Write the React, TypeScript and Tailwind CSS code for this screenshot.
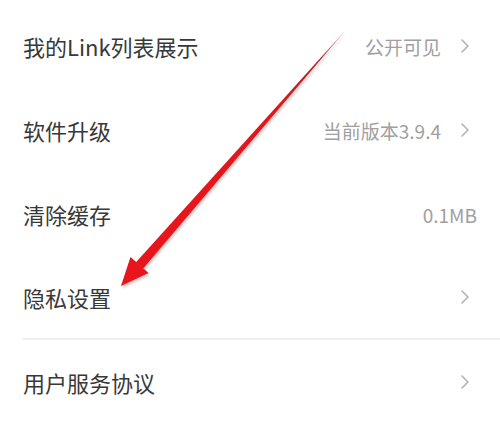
import React from "react";

const Chevron = () => (
  <svg width="10" height="16" viewBox="0 0 10 16" className="ml-[19px] shrink-0">
    <polyline points="2,2 8,8 2,14" fill="none" stroke="#b3b3b3" strokeWidth="1.6" strokeLinecap="round" strokeLinejoin="round" />
  </svg>
);

type Row = { label: string; value?: string; chevron: boolean; divider?: boolean };

const rows: Row[] = [
  { label: "我的Link列表展示", value: "公开可见", chevron: true },
  { label: "软件升级", value: "当前版本3.9.4", chevron: true },
  { label: "清除缓存", value: "0.1MB", chevron: false },
  { label: "隐私设置", chevron: true, divider: true },
  { label: "用户服务协议", chevron: true },
];

export default function App() {
  return (
    <div
      className="relative w-[500px] h-[421px] bg-white overflow-hidden"
      style={{ fontFamily: '"Noto Sans CJK SC", "Noto Sans", sans-serif' }}
    >
      <div className="pt-[4px] flex flex-col">
        {rows.map((r) => (
          <div key={r.label} className="pl-[23px]">
            <div
              className={`h-[84px] flex items-center justify-between ${r.chevron ? "pr-[30px]" : "pr-[23px]"} ${r.divider ? "border-b-2 border-[#f0f0f0]" : ""}`}
            >
              <span className="text-[22px] text-[#383838] leading-none">{r.label}</span>
              <div className="flex items-center">
                {r.value && <span className="text-[19px] text-[#a0a0a0] leading-none">{r.value}</span>}
                {r.chevron && <Chevron />}
              </div>
            </div>
          </div>
        ))}
      </div>
      <svg
        className="absolute left-0 top-0 pointer-events-none"
        width="500"
        height="421"
        viewBox="0 0 500 421"
      >
        <defs>
          <linearGradient id="shaft" x1="344" y1="32" x2="140" y2="265" gradientUnits="userSpaceOnUse">
            <stop offset="0" stopColor="#d8b0b0" />
            <stop offset="0.12" stopColor="#a8262a" />
            <stop offset="0.35" stopColor="#e0181e" />
            <stop offset="1" stopColor="#e8131a" />
          </linearGradient>
          <filter id="sh" x="-20%" y="-20%" width="140%" height="140%">
            <feGaussianBlur in="SourceAlpha" stdDeviation="1.5" />
            <feOffset dx="1" dy="2" result="b" />
            <feComponentTransfer>
              <feFuncA type="linear" slope="0.25" />
            </feComponentTransfer>
            <feMerge>
              <feMergeNode />
              <feMergeNode in="SourceGraphic" />
            </feMerge>
          </filter>
        </defs>
        <g filter="url(#sh)">
          <polygon points="344.6,31.6 343.4,32.4 136,262.3 143.2,268.4" fill="url(#shaft)" />
          <polygon points="121,286 130.5,257 148.5,273" fill="#e8131a" />
        </g>
      </svg>
    </div>
  );
}
